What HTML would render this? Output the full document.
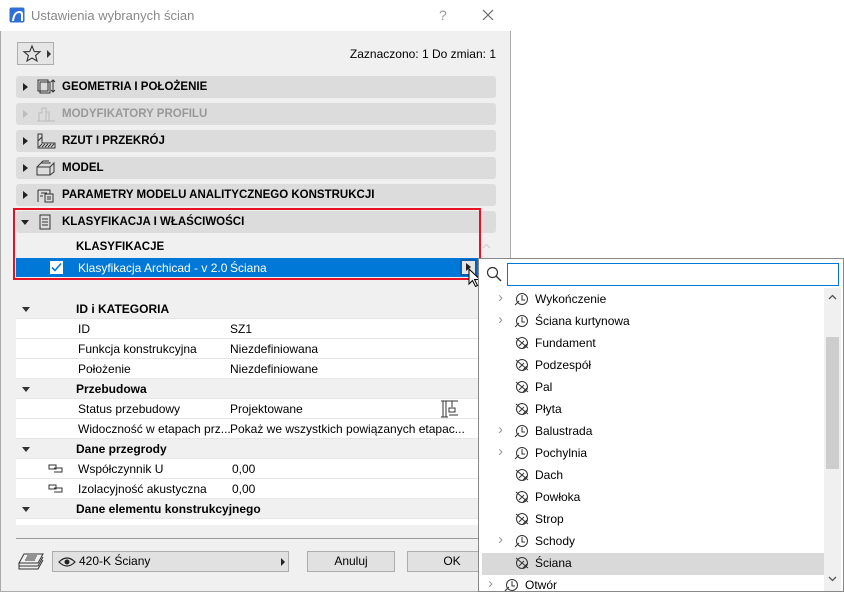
<!DOCTYPE html>
<html><head><meta charset="utf-8"><style>
*{box-sizing:border-box;margin:0;padding:0}
body{width:844px;height:592px;background:#fff;font-family:"Liberation Sans",sans-serif;font-size:12px;color:#000;position:relative;overflow:hidden}
.abs{position:absolute}
#dlg{left:0;top:0;width:511px;height:592px;background:#f0f0f0;border:1px solid #aaa;border-top:none}
#title{left:0;top:0;width:511px;height:31px;background:#fff}
.bar{position:absolute;left:16px;width:480px;height:22px;background:#dcdcdc;border-radius:3px;font-weight:bold;font-size:11.5px;line-height:22px;padding-left:46px}
.bar .tri{position:absolute;left:7px;top:7px;width:0;height:0;border-left:5px solid #222;border-top:4px solid transparent;border-bottom:4px solid transparent}
.bar svg{position:absolute;left:20px;top:3px}
.row{position:absolute;left:16px;width:462px;height:20px;line-height:20px;background:#fff;border-bottom:1px solid #e6e6e6}
.row.g{background:#f0f0f0;font-weight:bold}
.row .a{position:absolute;left:62px}
.row .b{position:absolute;left:214px}
.row.g .a{left:60px}
.dtri{position:absolute;left:6px;top:8px;border-top:5px solid #333;border-left:4px solid transparent;border-right:4px solid transparent}
.btn{position:absolute;top:551px;height:21px;background:#e1e1e1;border:1px solid #adadad;text-align:center;line-height:19px;font-size:12px}
#pop{left:478px;top:258px;width:366px;height:334px;background:#fff;border:1px solid #888}
.it{position:absolute;left:3px;width:342px;height:22px;line-height:22px;font-size:12px}
.it .t{position:absolute;left:54px}
.it .ch{position:absolute;left:17px;top:-1px;color:#999;font-size:15px}
.it svg{position:absolute;left:33px;top:4px}
</style></head><body>
<div id="dlg" class="abs"></div>
<div id="title" class="abs">
 <svg class="abs" style="left:9px;top:7px" width="16" height="16" viewBox="0 0 16 16"><rect x="0.5" y="0.5" width="15" height="15" rx="2" fill="#2f6fd6"/><path d="M3 14 Q4 4 11 4 Q14 4 14 7 L14 14 L12 14 L12 8 Q12 6 10 6 Q6 6 5 14Z" fill="#fff"/></svg>
 <span class="abs" style="left:31px;top:8px;font-size:13px;color:#888">Ustawienia wybranych ścian</span>
 <span class="abs" style="left:439px;top:7px;font-size:14px;color:#999">?</span>
 <svg class="abs" style="left:482px;top:9px" width="12" height="12"><path d="M1 1L11 11M11 1L1 11" stroke="#666" stroke-width="1.2"/></svg>
</div>
<div class="abs" style="left:17px;top:42px;width:37px;height:23px;border:1px solid #adadad;background:#e5e5e5"></div>
<svg class="abs" style="left:22px;top:44px" width="30" height="20"><path d="M10 2L12.3 7.6 18 7.8 13.6 11.4 15 17 10 14 5 17 6.4 11.4 2 7.8 7.7 7.6Z" fill="none" stroke="#333" stroke-width="1.1"/><path d="M25 6L29 10 25 14Z" fill="#333"/></svg>
<span class="abs" style="right:348px;top:47px">Zaznaczono: 1 Do zmian: 1</span>

<div class="bar" style="top:76px"><span class="tri"></span><svg width="20" height="16"><rect x="2" y="1" width="10" height="11" fill="none" stroke="#333"/><rect x="4" y="3" width="10" height="11" fill="none" stroke="#333"/><path d="M17 1v12M15 3l2-2 2 2M15 11l2 2 2-2" stroke="#333" fill="none"/></svg>GEOMETRIA I POŁOŻENIE</div>
<div class="bar" style="top:103px;color:#999"><span class="tri" style="border-left-color:#bbb"></span><svg width="20" height="16"><path d="M6 2h4v13H3V7h3zM10 6h3v9" fill="none" stroke="#bbb"/><path d="M1 15h18" stroke="#bbb"/></svg>MODYFIKATORY PROFILU</div>
<div class="bar" style="top:130px"><span class="tri"></span><svg width="20" height="16"><path d="M2 1v14h17V10H6V1z" fill="none" stroke="#333"/><path d="M3 14l3-3M6 14l3-3M9 14l3-3M12 14l3-3M15 14l3-3M2 8l4-4" stroke="#333"/></svg>RZUT I PRZEKRÓJ</div>
<div class="bar" style="top:157px"><span class="tri"></span><svg width="20" height="16"><path d="M1 7h13v8H1zM1 7l4-4h9v-1M14 7l4-4v9l-4 3M5 3l2-2h6" fill="none" stroke="#333"/></svg>MODEL</div>
<div class="bar" style="top:184px"><span class="tri"></span><svg width="20" height="16"><path d="M2 3h12v4M2 3v12M5 6h6M4 9h3" fill="none" stroke="#333"/><rect x="9" y="7" width="8" height="8" fill="none" stroke="#333"/><path d="M11 10h4M11 12h4" stroke="#333"/></svg>PARAMETRY MODELU ANALITYCZNEGO KONSTRUKCJI</div>
<div class="bar" style="top:211px"><span class="tri" style="left:5px;top:9px;border-left:4px solid transparent;border-right:4px solid transparent;border-top:5px solid #222;border-bottom:none"></span><svg width="20" height="16"><rect x="4" y="1" width="10" height="14" fill="none" stroke="#333"/><path d="M6 5h6M6 8h6M6 11h6" stroke="#333"/></svg>KLASYFIKACJA I WŁAŚCIWOŚCI</div>

<span class="abs" style="left:76px;top:241px;font-weight:bold;font-size:11.5px">KLASYFIKACJE</span>
<svg class="abs" style="left:482px;top:243px" width="9" height="6"><path d="M1 5l3.5-3.5L8 5" stroke="#ccc" fill="none"/></svg>
<div class="abs" style="left:16px;top:258px;width:462px;height:19px;background:#0078d7"></div>
<div class="abs" style="left:50px;top:261px;width:13px;height:13px;background:#fff"></div>
<svg class="abs" style="left:50px;top:261px" width="13" height="13"><path d="M2 6.5l3 3 6-7" stroke="#0078d7" stroke-width="1.6" fill="none"/></svg>
<span class="abs" style="left:78px;top:261px;color:#fff">Klasyfikacja Archicad - v 2.0</span>
<span class="abs" style="left:230px;top:261px;color:#fff">Ściana</span>
<div class="abs" style="left:460px;top:259px;width:17px;height:17px;border:2px solid #0a5fb0;background:#e5e5e5"></div>
<div class="abs" style="left:466px;top:263px;border-left:5px solid #222;border-top:4px solid transparent;border-bottom:4px solid transparent"></div>
<div class="abs" style="left:13px;top:208px;width:468px;height:72px;border:2px solid #e81123"></div>
<svg class="abs" style="left:468px;top:268px" width="14" height="20"><path d="M1 1v15l3.5-3.5 3 6 2-1-3-6H12z" fill="#fff" stroke="#000"/></svg>

<div class="row g" style="top:299px"><span class="dtri"></span><span class="a">ID i KATEGORIA</span></div>
<div class="row" style="top:319px"><span class="a">ID</span><span class="b">SZ1</span></div>
<div class="row" style="top:339px"><span class="a">Funkcja konstrukcyjna</span><span class="b">Niezdefiniowana</span></div>
<div class="row" style="top:359px"><span class="a">Położenie</span><span class="b">Niezdefiniowane</span></div>
<div class="row g" style="top:379px"><span class="dtri"></span><span class="a">Przebudowa</span></div>
<div class="row" style="top:399px"><span class="a">Status przebudowy</span><span class="b">Projektowane</span>
<svg class="abs" style="left:424px;top:1px" width="18" height="18"><path d="M1 1h17M3 1v16M6 1v16M1 17h7M12 1v6M9 8h6v4H9zM9 15h9" fill="none" stroke="#333"/></svg></div>
<div class="row" style="top:419px"><span class="a">Widoczność w etapach prz...</span><span class="b">Pokaż we wszystkich powiązanych etapac...</span></div>
<div class="row g" style="top:439px"><span class="dtri"></span><span class="a">Dane przegrody</span></div>
<div class="row" style="top:459px"><svg class="abs" style="left:32px;top:5px" width="16" height="9"><path d="M1 1h7v4H1zM6 4h8v4H6" fill="none" stroke="#333"/></svg><span class="a">Współczynnik U</span><span class="b" style="left:216px">0,00</span></div>
<div class="row" style="top:479px"><svg class="abs" style="left:32px;top:5px" width="16" height="9"><path d="M1 1h7v4H1zM6 4h8v4H6" fill="none" stroke="#333"/></svg><span class="a">Izolacyjność akustyczna</span><span class="b" style="left:216px">0,00</span></div>
<div class="row g" style="top:499px"><span class="dtri"></span><span class="a">Dane elementu konstrukcyjnego</span></div>
<div class="row" style="top:519px;height:6px;border:none"></div>
<div class="abs" style="left:16px;top:538px;width:462px;height:1px;background:#999"></div>

<svg class="abs" style="left:18px;top:553px" width="26" height="18"><path d="M6 1h19l-5 9H1zM1 10v3h19l5-9M1 13v3h19l5-9" fill="none" stroke="#333"/><path d="M9 3h10M8 5h10M7 7h10" stroke="#333"/></svg>
<div class="btn" style="left:52px;width:237px;text-align:left;padding-left:26px">420-K Ściany</div>
<svg class="abs" style="left:58px;top:556px" width="18" height="12"><path d="M1 6Q9 -2 17 6Q9 14 1 6Z" fill="none" stroke="#222" stroke-width="1.2"/><circle cx="9" cy="6" r="2.5" fill="#222"/></svg>
<div class="abs" style="left:281px;top:558px;border-left:4px solid #222;border-top:4px solid transparent;border-bottom:4px solid transparent"></div>
<div class="btn" style="left:307px;width:88px">Anuluj</div>
<div class="btn" style="left:407px;width:90px">OK</div>

<div id="pop" class="abs">
 <svg class="abs" style="left:7px;top:7px" width="16" height="16"><circle cx="6.5" cy="6.5" r="5" fill="none" stroke="#333" stroke-width="1.2"/><path d="M10 10l5 5" stroke="#333" stroke-width="1.4"/></svg>
 <div class="abs" style="left:28px;top:4px;width:332px;height:23px;border:1px solid #0078d7"></div>
 <div class="abs" style="left:345px;top:29px;width:17px;height:303px;background:#f0f0f0"></div>
 <div class="abs" style="left:347px;top:78px;width:13px;height:132px;background:#cdcdcd"></div>
 <svg class="abs" style="left:349px;top:35px" width="9" height="6"><path d="M1 5l3.5-3.5L8 5" stroke="#555" fill="none" stroke-width="1.3"/></svg>
 <svg class="abs" style="left:349px;top:317px" width="9" height="6"><path d="M1 1l3.5 3.5L8 1" stroke="#555" fill="none" stroke-width="1.3"/></svg>
 <div class="abs" style="left:3px;top:294px;width:342px;height:22px;background:#d9d9d9"></div>
</div>
<div class="abs" style="left:478px;top:258px;width:366px;height:334px">
 <div class="it" style="top:30px"><span class="ch">›</span><svg width="16" height="14"><circle cx="8" cy="7" r="5.5" fill="none" stroke="#333"/><path d="M8 3v5h3M1 13l4-4" stroke="#333" fill="none"/></svg><span class="t">Wykończenie</span></div>
 <div class="it" style="top:52px"><span class="ch">›</span><svg width="16" height="14"><circle cx="8" cy="7" r="5.5" fill="none" stroke="#333"/><path d="M8 3v5h3M1 13l4-4" stroke="#333" fill="none"/></svg><span class="t">Ściana kurtynowa</span></div>
 <div class="it" style="top:74px"><svg width="16" height="14"><circle cx="8" cy="7" r="5.5" fill="none" stroke="#333"/><path d="M2 2l12 10M5 10l5-5M9 12l4-4" stroke="#333"/></svg><span class="t">Fundament</span></div>
 <div class="it" style="top:96px"><svg width="16" height="14"><circle cx="8" cy="7" r="5.5" fill="none" stroke="#333"/><path d="M2 2l12 10M5 10l5-5M9 12l4-4" stroke="#333"/></svg><span class="t">Podzespół</span></div>
 <div class="it" style="top:118px"><svg width="16" height="14"><circle cx="8" cy="7" r="5.5" fill="none" stroke="#333"/><path d="M2 2l12 10M5 10l5-5M9 12l4-4" stroke="#333"/></svg><span class="t">Pal</span></div>
 <div class="it" style="top:140px"><svg width="16" height="14"><circle cx="8" cy="7" r="5.5" fill="none" stroke="#333"/><path d="M2 2l12 10M5 10l5-5M9 12l4-4" stroke="#333"/></svg><span class="t">Płyta</span></div>
 <div class="it" style="top:162px"><span class="ch">›</span><svg width="16" height="14"><circle cx="8" cy="7" r="5.5" fill="none" stroke="#333"/><path d="M8 3v5h3M1 13l4-4" stroke="#333" fill="none"/></svg><span class="t">Balustrada</span></div>
 <div class="it" style="top:184px"><span class="ch">›</span><svg width="16" height="14"><circle cx="8" cy="7" r="5.5" fill="none" stroke="#333"/><path d="M8 3v5h3M1 13l4-4" stroke="#333" fill="none"/></svg><span class="t">Pochylnia</span></div>
 <div class="it" style="top:206px"><svg width="16" height="14"><circle cx="8" cy="7" r="5.5" fill="none" stroke="#333"/><path d="M2 2l12 10M5 10l5-5M9 12l4-4" stroke="#333"/></svg><span class="t">Dach</span></div>
 <div class="it" style="top:228px"><svg width="16" height="14"><circle cx="8" cy="7" r="5.5" fill="none" stroke="#333"/><path d="M2 2l12 10M5 10l5-5M9 12l4-4" stroke="#333"/></svg><span class="t">Powłoka</span></div>
 <div class="it" style="top:250px"><svg width="16" height="14"><circle cx="8" cy="7" r="5.5" fill="none" stroke="#333"/><path d="M2 2l12 10M5 10l5-5M9 12l4-4" stroke="#333"/></svg><span class="t">Strop</span></div>
 <div class="it" style="top:272px"><span class="ch">›</span><svg width="16" height="14"><circle cx="8" cy="7" r="5.5" fill="none" stroke="#333"/><path d="M8 3v5h3M1 13l4-4" stroke="#333" fill="none"/></svg><span class="t">Schody</span></div>
 <div class="it" style="top:294px"><svg width="16" height="14"><circle cx="8" cy="7" r="5.5" fill="none" stroke="#333"/><path d="M2 2l12 10M5 10l5-5M9 12l4-4" stroke="#333"/></svg><span class="t">Ściana</span></div>
 <div class="it" style="top:316px"><span class="ch" style="left:7px">›</span><svg width="16" height="14" style="left:23px"><circle cx="8" cy="7" r="5.5" fill="none" stroke="#333"/><path d="M8 3v5h3M1 13l4-4" stroke="#333" fill="none"/></svg><span class="t" style="left:44px">Otwór</span></div>
</div>
</body></html>
